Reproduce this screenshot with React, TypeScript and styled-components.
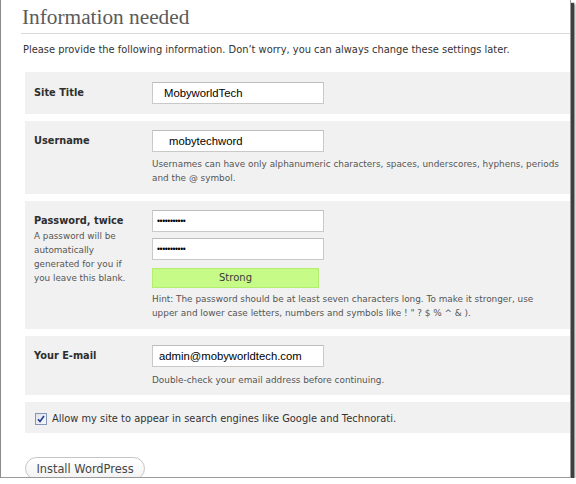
import React from 'react';
import styled, { createGlobalStyle } from 'styled-components';

const GlobalStyle = createGlobalStyle`
  html, body {
    margin: 0;
    padding: 0;
    background: #ffffff;
  }
  body {
    font-family: 'DejaVu Sans', Verdana, sans-serif;
    color: #333333;
  }
`;

// screenshot frame: thin left edge, heavy shadow right and bottom
const Frame = styled.div`
  width: 569px;
  height: 477px;
  background: #ffffff;
  border-left: 1px solid #8c8c8c;
  border-right: 1px solid #9a9a9a;
  border-bottom: 1px solid #9a9a9a;
  box-shadow: 3px 3px 1px #3f3f3f, 4px 4px 2px #8a8a8a;
  overflow: hidden;
`;

const Page = styled.div`
  padding-left: 20px;
`;

const Title = styled.h1`
  margin: 0;
  padding: 5px 0 4px 1px;
  font-family: 'Liberation Serif', 'Times New Roman', serif;
  font-weight: normal;
  font-size: 21.3px;
  line-height: 24px;
  color: #5b5b5b;
  border-bottom: 1px solid #dadada;
`;

const Intro = styled.p`
  margin: 9px 0 15px 2px;
  font-size: 9.9px;
  line-height: 14px;
  color: #333333;
`;

const Rows = styled.div`
  display: flex;
  flex-direction: column;
  gap: 7px;
  margin-left: 4px;
`;

const Row = styled.div<{ $top?: number; $bottom?: number }>`
  display: grid;
  grid-template-columns: 127px 1fr;
  background: #f1f1f1;
  padding: ${(p) => p.$top ?? 10}px 0 ${(p) => p.$bottom ?? 10}px;
`;

const LabelCell = styled.div`
  padding: 2px 0 0 9px;
`;

const Label = styled.div`
  font-weight: bold;
  font-size: 9.8px;
  line-height: 17px;
  color: #2e2e2e;
`;

const Aside = styled.div`
  font-size: 8.8px;
  line-height: 14px;
  color: #555555;
`;

const Field = styled.div`
  display: flex;
  flex-direction: column;
  align-items: flex-start;
`;

const Input = styled.input<{ $indent?: number }>`
  box-sizing: border-box;
  width: 172px;
  height: 22px;
  margin: 0;
  padding: 0 0 0 ${(p) => p.$indent ?? 6}px;
  border: 1px solid #c9c9c9;
  border-top-color: #bdbdbd;
  background: #ffffff;
  font-family: 'Liberation Sans', Arial, sans-serif;
  font-size: 11.3px;
  color: #000000;
  outline: none;
`;

const Secret = styled(Input)`
  font-size: 8.5px;
  letter-spacing: -0.4px;
  & + & {
    margin-top: 6px;
  }
`;

const Strength = styled.div`
  box-sizing: border-box;
  width: 167px;
  height: 20px;
  margin-top: 8px;
  background: #c6fb88;
  border: 1px solid #b2ef70;
  text-align: center;
  font-size: 10px;
  line-height: 18px;
  color: #3a3a3a;
`;

const Help = styled.div<{ $gap?: number }>`
  margin-top: ${(p) => p.$gap ?? 5}px;
  font-size: 8.9px;
  line-height: 14px;
  color: #555555;
`;

const CheckRow = styled.label`
  display: flex;
  align-items: center;
  gap: 5px;
  background: #f1f1f1;
  padding: 10px 0 7px 10px;
  font-size: 9.9px;
  line-height: 14px;
  color: #333333;
`;

const Box = styled.span`
  box-sizing: border-box;
  display: inline-flex;
  align-items: center;
  justify-content: center;
  width: 12px;
  height: 12px;
  border: 1px solid #8495b8;
  background: linear-gradient(135deg, #dfe3ee, #f6f7fb);
`;

const Actions = styled.div`
  padding: 24px 0 0 4px;
`;

const Button = styled.button`
  box-sizing: border-box;
  width: 120px;
  height: 23px;
  padding: 0;
  border: 1px solid #c4c4c4;
  border-radius: 12px;
  background: linear-gradient(#ffffff, #f2f2f2);
  font-family: 'DejaVu Sans', Verdana, sans-serif;
  font-size: 11.4px;
  color: #464646;
  cursor: pointer;
`;

export default function App() {
  return (
    <>
      <GlobalStyle />
      <Frame>
        <Page>
          <Title>Information needed</Title>
          <Intro>
            Please provide the following information. Don’t worry, you can always change these
            settings later.
          </Intro>
          <Rows>
            <Row>
              <LabelCell>
                <Label>Site Title</Label>
              </LabelCell>
              <Field>
                <Input $indent={11} defaultValue="MobyworldTech" />
              </Field>
            </Row>
            <Row $top={9} $bottom={9}>
              <LabelCell>
                <Label>Username</Label>
              </LabelCell>
              <Field>
                <Input $indent={16} defaultValue="mobytechword" />
                <Help>
                  Usernames can have only alphanumeric characters, spaces, underscores, hyphens,
                  periods and the @ symbol.
                </Help>
              </Field>
            </Row>
            <Row $top={9} $bottom={9}>
              <LabelCell>
                <Label>Password, twice</Label>
                <Aside>
                  A password will be
                  <br />
                  automatically
                  <br />
                  generated for you if
                  <br />
                  you leave this blank.
                </Aside>
              </LabelCell>
              <Field>
                <Secret type="password" $indent={4} defaultValue="abcdefghijk" />
                <Secret type="password" $indent={4} defaultValue="abcdefghijk" />
                <Strength>Strong</Strength>
                <Help $gap={4}>
                  Hint: The password should be at least seven characters long. To make it
                  stronger, use
                  <br />
                  upper and lower case letters, numbers and symbols like ! " ? $ % ^ &amp; ).
                </Help>
              </Field>
            </Row>
            <Row $top={9} $bottom={8}>
              <LabelCell>
                <Label>Your E-mail</Label>
              </LabelCell>
              <Field>
                <Input $indent={6} defaultValue="admin@mobyworldtech.com" />
                <Help $gap={6}>Double-check your email address before continuing.</Help>
              </Field>
            </Row>
            <CheckRow>
              <Box>
                <svg width="8" height="8" viewBox="0 0 8 8">
                  <path d="M1 4.2 L3 6.5 L7 1" fill="none" stroke="#243b86" strokeWidth="1.6" />
                </svg>
              </Box>
              Allow my site to appear in search engines like Google and Technorati.
            </CheckRow>
          </Rows>
          <Actions>
            <Button>Install WordPress</Button>
          </Actions>
        </Page>
      </Frame>
    </>
  );
}
